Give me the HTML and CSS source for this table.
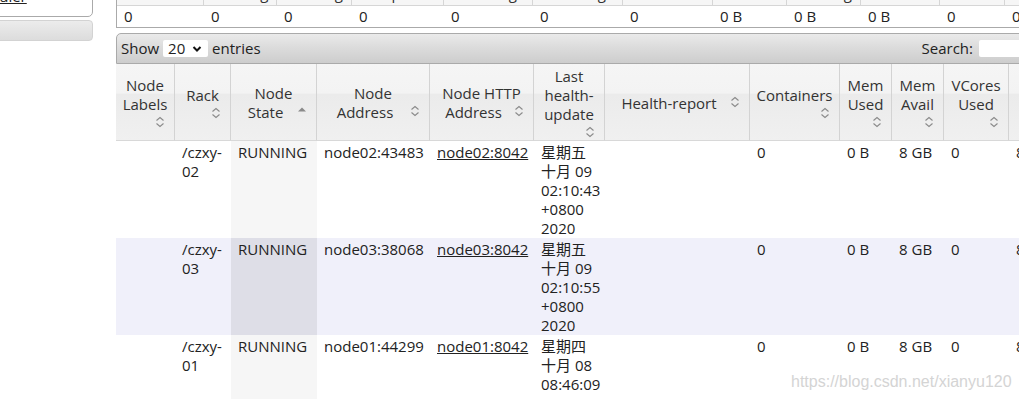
FILE: index.html
```html
<!DOCTYPE html>
<html lang="en">
<head>
<meta charset="utf-8">
<title>Nodes of the cluster</title>
<link rel="stylesheet" href="styles.css">
</head>
<body>
<div class="page">
  <aside class="nav">
    <div class="nav-box"><a class="nav-link" href="#">Scheduler</a></div>
    <div class="nav-head"></div>
  </aside>
  <main class="content">
    <table class="metrics">
      <colgroup>
        <col class="mc-87"><col class="mc-73"><col class="mc-75"><col class="mc-92"><col class="mc-89"><col class="mc-90"><col class="mc-90"><col class="mc-74"><col class="mc-74"><col class="mc-79"><col class="mc-65"><col class="mc-75">
      </colgroup>
      <thead>
        <tr>
          <th>Apps Submitted</th><th>Apps Pending</th><th>Apps Running</th><th>Apps Completed</th><th>Containers Running</th><th>Containers Pending</th><th>Containers Reserved</th><th>Memory Used</th><th>Memory Pending</th><th>Memory Reserved</th><th>VCores Used</th><th>VCores Pending</th>
        </tr>
      </thead>
      <tbody>
        <tr>
          <td>0</td><td>0</td><td>0</td><td>0</td><td>0</td><td>0</td><td>0</td><td>0 B</td><td>0 B</td><td>0 B</td><td>0</td><td>0</td>
        </tr>
      </tbody>
    </table>

    <div class="dt">
      <div class="dt-toolbar">
        <div class="dt-length">Show <span class="select"><span class="select-value">20</span><svg class="select-arrow" width="10" height="8" viewBox="0 0 10 8"><path d="M1.5 2 L5 5.5 L8.5 2" fill="none" stroke="#111" stroke-width="2"/></svg></span> entries</div>
        <div class="dt-filter">Search: <span class="search-input"></span></div>
      </div>
      <table class="nodes">
        <colgroup>
          <col class="nc-59"><col class="nc-56"><col class="nc-86"><col class="nc-113"><col class="nc-104"><col class="nc-71"><col class="nc-145"><col class="nc-90"><col class="nc-52"><col class="nc-52"><col class="nc-65"><col class="nc-75"><col class="nc-80">
        </colgroup>
        <thead>
          <tr>
            <th>Node<br>Labels<br><svg class="sort" width="16" height="16" viewBox="0 0 16 16"><path d="M4.5 6.5 L8 3.5 L11.5 6.5 M4.5 9.5 L8 12.5 L11.5 9.5" fill="none" stroke="#8a8a8a" stroke-width="1.1"/></svg></th>
            <th>Rack<br><svg class="sort" width="16" height="16" viewBox="0 0 16 16"><path d="M4.5 6.5 L8 3.5 L11.5 6.5 M4.5 9.5 L8 12.5 L11.5 9.5" fill="none" stroke="#8a8a8a" stroke-width="1.1"/></svg></th>
            <th>Node<br><svg class="sort" width="16" height="16" viewBox="0 0 16 16"><path d="M4 8.5 L8 4.5 L12 8.5 Z" fill="#8a8a8a"/></svg>State</th>
            <th>Node<br><svg class="sort" width="16" height="16" viewBox="0 0 16 16"><path d="M4.5 6.5 L8 3.5 L11.5 6.5 M4.5 9.5 L8 12.5 L11.5 9.5" fill="none" stroke="#8a8a8a" stroke-width="1.1"/></svg>Address</th>
            <th>Node HTTP<br><svg class="sort" width="16" height="16" viewBox="0 0 16 16"><path d="M4.5 6.5 L8 3.5 L11.5 6.5 M4.5 9.5 L8 12.5 L11.5 9.5" fill="none" stroke="#8a8a8a" stroke-width="1.1"/></svg>Address</th>
            <th>Last<br>health-<br>update<br><svg class="sort" width="16" height="16" viewBox="0 0 16 16"><path d="M4.5 6.5 L8 3.5 L11.5 6.5 M4.5 9.5 L8 12.5 L11.5 9.5" fill="none" stroke="#8a8a8a" stroke-width="1.1"/></svg></th>
            <th><svg class="sort" width="16" height="16" viewBox="0 0 16 16"><path d="M4.5 6.5 L8 3.5 L11.5 6.5 M4.5 9.5 L8 12.5 L11.5 9.5" fill="none" stroke="#8a8a8a" stroke-width="1.1"/></svg>Health-report</th>
            <th>Containers<br><svg class="sort" width="16" height="16" viewBox="0 0 16 16"><path d="M4.5 6.5 L8 3.5 L11.5 6.5 M4.5 9.5 L8 12.5 L11.5 9.5" fill="none" stroke="#8a8a8a" stroke-width="1.1"/></svg></th>
            <th>Mem<br>Used<br><svg class="sort" width="16" height="16" viewBox="0 0 16 16"><path d="M4.5 6.5 L8 3.5 L11.5 6.5 M4.5 9.5 L8 12.5 L11.5 9.5" fill="none" stroke="#8a8a8a" stroke-width="1.1"/></svg></th>
            <th>Mem<br>Avail<br><svg class="sort" width="16" height="16" viewBox="0 0 16 16"><path d="M4.5 6.5 L8 3.5 L11.5 6.5 M4.5 9.5 L8 12.5 L11.5 9.5" fill="none" stroke="#8a8a8a" stroke-width="1.1"/></svg></th>
            <th>VCores<br>Used<br><svg class="sort" width="16" height="16" viewBox="0 0 16 16"><path d="M4.5 6.5 L8 3.5 L11.5 6.5 M4.5 9.5 L8 12.5 L11.5 9.5" fill="none" stroke="#8a8a8a" stroke-width="1.1"/></svg></th>
            <th>VCores<br>Avail<br><svg class="sort" width="16" height="16" viewBox="0 0 16 16"><path d="M4.5 6.5 L8 3.5 L11.5 6.5 M4.5 9.5 L8 12.5 L11.5 9.5" fill="none" stroke="#8a8a8a" stroke-width="1.1"/></svg></th>
            <th>Version<br><svg class="sort" width="16" height="16" viewBox="0 0 16 16"><path d="M4.5 6.5 L8 3.5 L11.5 6.5 M4.5 9.5 L8 12.5 L11.5 9.5" fill="none" stroke="#8a8a8a" stroke-width="1.1"/></svg></th>
          </tr>
        </thead>
        <tbody>
          <tr class="odd">
            <td></td><td>/czxy-02</td><td class="sorted">RUNNING</td><td>node02:43483</td><td><a href="#">node02:8042</a></td><td>星期五 十月 09 02:10:43 +0800 2020</td><td></td><td>0</td><td>0 B</td><td>8 GB</td><td>0</td><td>8</td><td>3.1.3</td>
          </tr>
          <tr class="even">
            <td></td><td>/czxy-03</td><td class="sorted">RUNNING</td><td>node03:38068</td><td><a href="#">node03:8042</a></td><td>星期五 十月 09 02:10:55 +0800 2020</td><td></td><td>0</td><td>0 B</td><td>8 GB</td><td>0</td><td>8</td><td>3.1.3</td>
          </tr>
          <tr class="odd">
            <td></td><td>/czxy-01</td><td class="sorted">RUNNING</td><td>node01:44299</td><td><a href="#">node01:8042</a></td><td>星期四 十月 08 08:46:09 +0800 2020</td><td></td><td>0</td><td>0 B</td><td>8 GB</td><td>0</td><td>8</td><td>3.1.3</td>
          </tr>
        </tbody>
      </table>
    </div>
  </main>
</div>
<div class="watermark">https://blog.csdn.net/xianyu120</div>
</body>
</html>
```

FILE: styles.css
```css
html, body {
  margin: 0;
  padding: 0;
  overflow: hidden;
  height: 100%;
}

body {
  font-family: "Open Sans", "Noto Sans CJK SC", sans-serif;
  font-size: 15px;
  line-height: 19px;
  color: #222;
  background: #fff;
  position: relative;
}

.page {
  display: flex;
  align-items: flex-start;
  gap: 23px;
  margin: -38px 0 0 -60px;
}

/* left navigation */
.nav {
  flex: none;
  width: 153px;
  display: flex;
  flex-direction: column;
  gap: 3px;
}

.nav-box {
  box-sizing: border-box;
  border: 1px solid #aaa;
  border-radius: 0 0 5px 5px;
  padding: 24px 16px 10px;
  background: #fff;
}

.nav-link {
  color: #222;
  text-decoration: underline;
}

.nav-head {
  box-sizing: border-box;
  height: 21px;
  border: 1px solid #d3d3d3;
  border-radius: 4px;
  background: linear-gradient(to bottom, #ececec 0%, #e4e4e4 50%, #dcdcdc 100%);
}

/* main content */
.content {
  flex: none;
  display: flex;
  flex-direction: column;
  gap: 5px;
}

.metrics {
  table-layout: fixed;
  border-collapse: separate;
  border-spacing: 0;
  border: 1px solid #aaa;
  width: 965px;
}

.metrics th {
  font-weight: normal;
  text-align: center;
  padding: 2px 6px;
  background: #f6f6f6;
  border-right: 1px solid #d6d6d6;
  border-bottom: 1px solid #d6d6d6;
  color: #333;
}

.metrics td {
  padding: 1px 7px;
  text-align: left;
}

.mc-87 { width: 87px; }
.mc-73 { width: 73px; }
.mc-75 { width: 75px; }
.mc-92 { width: 92px; }
.mc-89 { width: 89px; }
.mc-90 { width: 90px; }
.mc-74 { width: 74px; }
.mc-79 { width: 79px; }
.mc-65 { width: 65px; }

/* data table */
.dt {
  width: 1048px;
}

.dt-toolbar {
  box-sizing: border-box;
  height: 31px;
  display: flex;
  align-items: center;
  justify-content: space-between;
  padding: 0 5px 0 4px;
  border: 1px solid #aaa;
  border-radius: 5px 0 0 0;
  background: linear-gradient(to bottom, #eaeaea 0%, #dcdcdc 45%, #cdcdcd 100%);
  color: #222;
}

.dt-length {
  display: flex;
  align-items: center;
  gap: 4px;
}

.select {
  display: inline-flex;
  align-items: center;
  justify-content: space-between;
  box-sizing: border-box;
  width: 45px;
  height: 17px;
  padding: 0 6px 0 5px;
  background: #fff;
  border-radius: 2px;
}

.select-value {
  line-height: 17px;
}

.dt-filter {
  display: flex;
  align-items: center;
  gap: 6px;
}

.search-input {
  display: inline-block;
  width: 179px;
  height: 17px;
  background: #fff;
  border-radius: 2px;
}

.nodes {
  table-layout: fixed;
  border-collapse: separate;
  border-spacing: 0;
  width: 1048px;
}

.nc-59 { width: 59px; }
.nc-56 { width: 56px; }
.nc-86 { width: 86px; }
.nc-113 { width: 113px; }
.nc-104 { width: 104px; }
.nc-71 { width: 71px; }
.nc-145 { width: 145px; }
.nc-90 { width: 90px; }
.nc-52 { width: 52px; }
.nc-65 { width: 65px; }
.nc-75 { width: 75px; }
.nc-80 { width: 80px; }

.nodes th {
  font-weight: normal;
  text-align: center;
  vertical-align: middle;
  padding: 2px 6px 0 6px;
  height: 74px;
  color: #333;
  background: linear-gradient(to bottom, #f5f5f5 0%, #f3f3f3 38%, #ebebeb 40%, #f0f0f0 100%);
  border-right: 1px solid #d3d3d3;
  border-bottom: 1px solid #d8d8d8;
}

.sort {
  float: right;
}

.nodes td {
  vertical-align: top;
  padding: 2px 6px 0 7px;
  overflow: visible;
}

.nodes tr.even td {
  background: #f0f0fa;
}

.nodes tr.odd td.sorted {
  background: #f6f6f6;
}

.nodes tr.even td.sorted {
  background: #dedee7;
}

.nodes a {
  color: #222;
  text-decoration: underline;
}

.watermark {
  position: absolute;
  left: 791px;
  top: 372px;
  font-family: "Liberation Sans", Arial, sans-serif;
  font-size: 16px;
  line-height: 20px;
  color: #d4d4d4;
  white-space: nowrap;
}
```
